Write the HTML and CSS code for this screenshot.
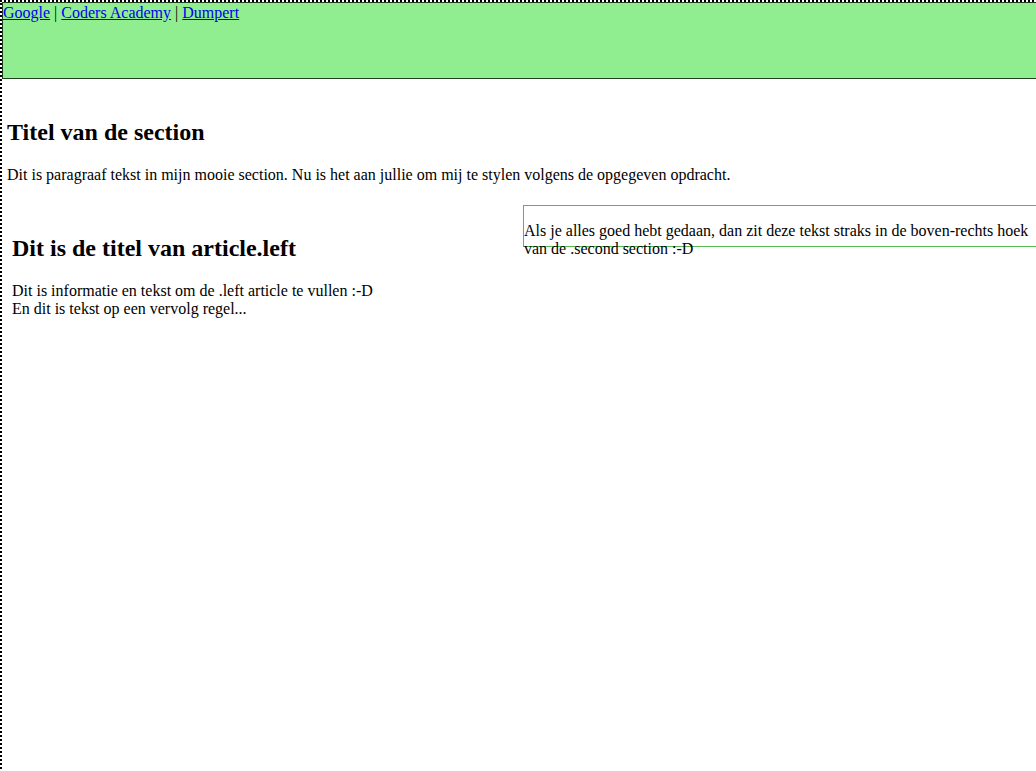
FILE: index.html
```html
<!DOCTYPE html>
<html>
<head>
<meta charset="utf-8">
<title>Opdracht</title>
<link rel="stylesheet" href="styles.css">
</head>
<body>
<div class="page">
  <header class="top">
    <a href="#">Google</a> | <a href="#">Coders Academy</a> | <a href="#">Dumpert</a>
  </header>
  <section class="first">
    <h2>Titel van de section</h2>
    <p>Dit is paragraaf tekst in mijn mooie section. Nu is het aan jullie om mij te stylen volgens de opgegeven opdracht.</p>
  </section>
  <section class="second">
    <article class="left">
      <h2>Dit is de titel van article.left</h2>
      <p>Dit is informatie en tekst om de .left article te vullen :-D<br>En dit is tekst op een vervolg regel...</p>
    </article>
    <article class="right">
      <p>Als je alles goed hebt gedaan, dan zit deze tekst straks in de boven-rechts hoek van de .second section :-D</p>
    </article>
  </section>
</div>
</body>
</html>
```
FILE: styles.css
```css
html {
  overflow: hidden;
}
body {
  margin: 0;
  font-family: "Liberation Serif", "Times New Roman", serif;
  font-size: 16px;
  color: #000;
}
.page {
  width: 1036px;
  min-height: 771px;
  border-top: 2px dotted #000;
  border-left: 2px dotted #000;
}
.top {
  height: 74px;
  padding-top: 1px;
  background: #90ee90;
  border: 1px solid #1f3f1f;
}
.top a {
  color: #0000ee;
}
.first {
  padding: 20px 5px 0 5px;
}
.first h2 {
  font-size: 24px;
  margin: 19.92px 0;
}
.first p {
  margin: 16px 0;
}
.second {
  display: flex;
  align-items: flex-start;
  padding-top: 5px;
}
.left {
  width: 501px;
  padding: 10px 10px;
}
.left h2 {
  font-size: 24px;
  margin: 19.92px 0;
}
.left p {
  margin: 19px 0;
}
.right {
  flex: 1;
  height: 40px;
  border: 1px solid #55b855;
}
.right p {
  margin: 16px 0 0 0;
}
```
